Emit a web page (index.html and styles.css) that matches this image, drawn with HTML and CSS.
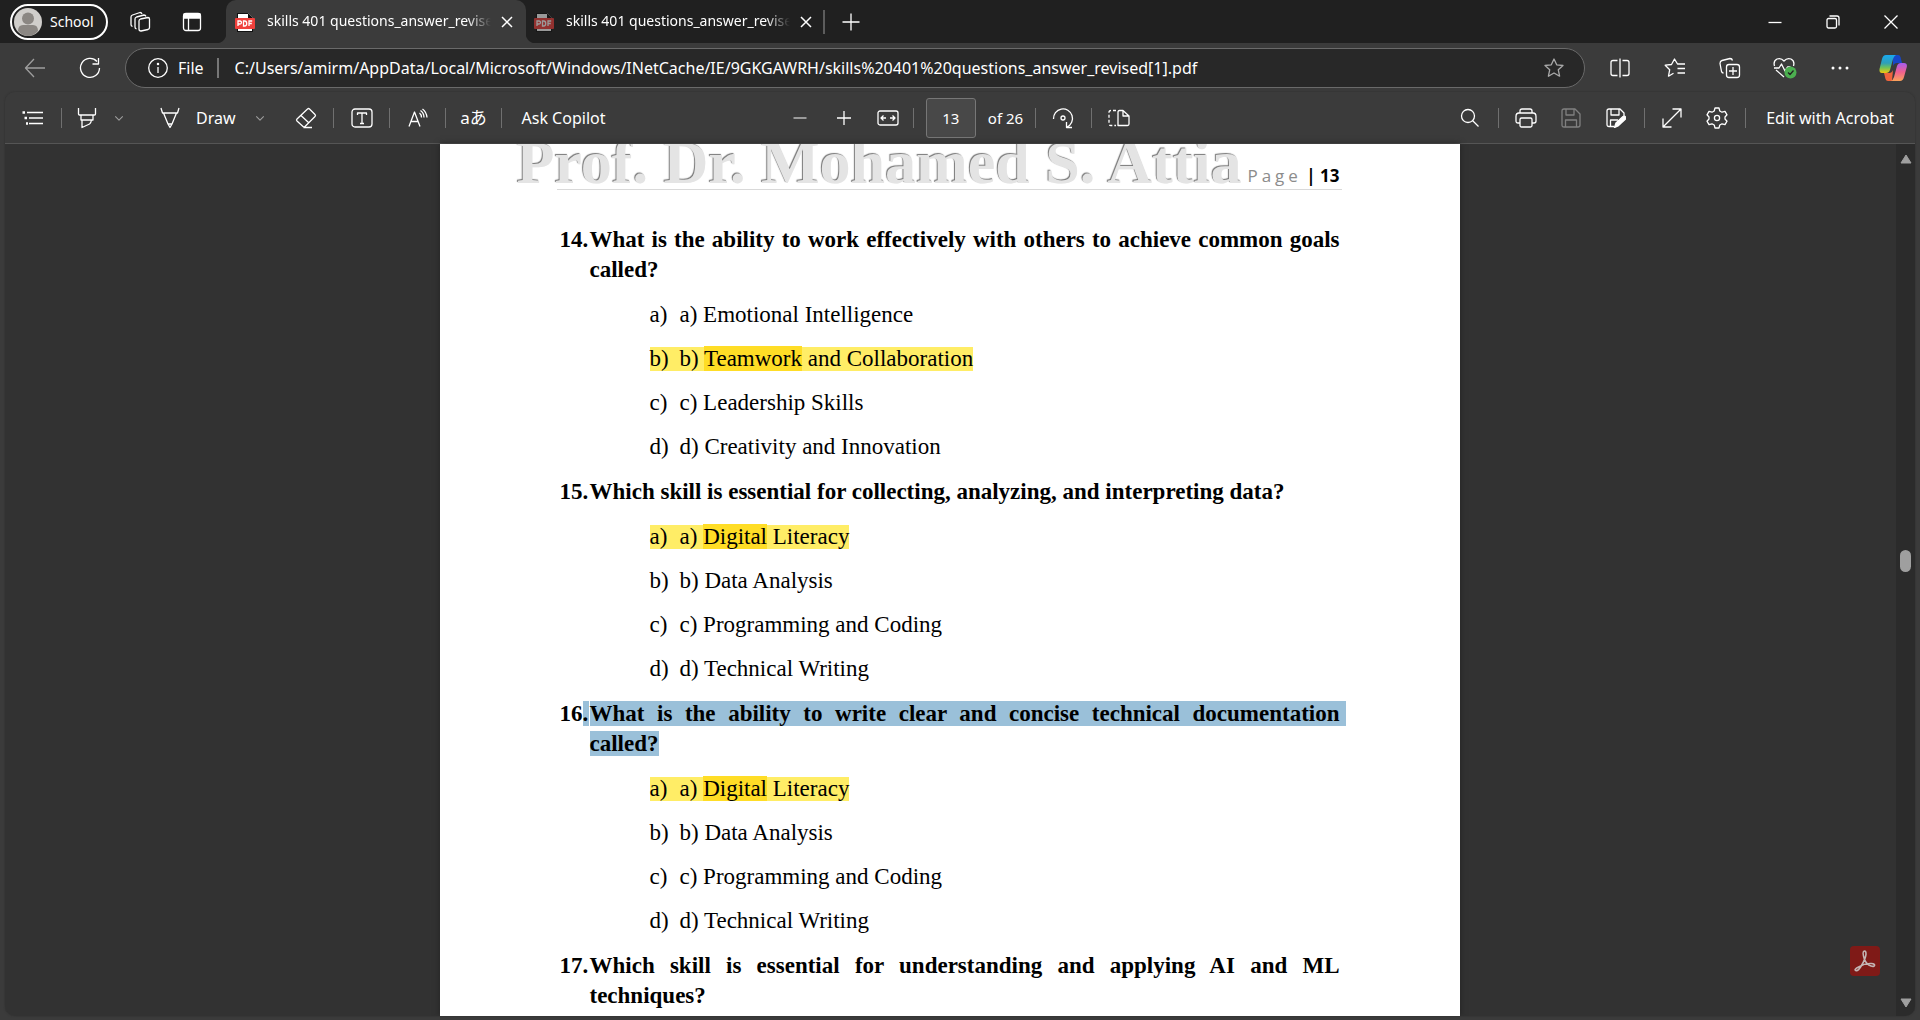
FILE: index.html
```html
<!DOCTYPE html>
<html lang="en">
<head>
<meta charset="utf-8">
<title>skills 401 questions_answer_revised[1].pdf</title>
<link rel="stylesheet" href="styles.css">
</head>
<body>
<svg class="defs" aria-hidden="true">
  <symbol id="pdf" viewBox="0 0 20 20">
    <path d="M2 1h11l5 5v13H2z" fill="#fff"/><path d="M2 1h11v1H3v4H2zM13 1l5 5h-5zM2 17h1v2h15v1H2zM17 6h1v13h-1z" fill="#111"/>
    <path d="M12 1l6 6h-1l-3-2-1-3z" fill="#111"/>
    <rect x="0" y="6" width="20" height="11" rx="1" fill="#f0403c"/>
    <path d="M3 14V9h2q1.500 0 1.500 1.500T5 12H3M8.500 9v5h1.200q2 0 2-2.500t-2-2.500zM14 14V9h3.200M14 11.500h2.800" fill="none" stroke="#fff" stroke-width="1.300"/>
  </symbol>
  <symbol id="x" viewBox="0 0 12 12"><path d="M1 1l10 10M11 1L1 11"/></symbol>
  <symbol id="chev" viewBox="0 0 12 12"><path d="M1.500 4L6 8.500 10.500 4"/></symbol>
</svg>

<header class="tabstrip">
  <button class="profile"><svg width="28" height="28" viewBox="0 0 28 28"><circle cx="14" cy="14" r="14" fill="#d0cecb"/><circle cx="14" cy="10.500" r="6" fill="#8b8783"/><path d="M4 23q0-6 5-6h10q5 0 5 6-4 5-10 5T4 23z" fill="#8b8783"/></svg>School</button>
  <button class="strip-btn" aria-label="Workspaces"><svg class="ic" width="22" height="22" viewBox="0 0 22 22"><path d="M11.500 8l7.500-1.500q1.500 0 1.500 1.500v8.500q0 1.500-1.500 2L12 20q-2 0-2-2v-8q0-1.500 1.500-2zM7.500 18Q6 17.500 6 16V8q0-1.500 1.500-2l7.500-2q1.500 0 2 1.500M3.500 15.500Q2 15 2 13.500V6q0-1.500 1.500-2L11 1.500q1.500 0 2 1.500"/></svg></button>
  <button class="strip-btn" aria-label="Tab actions"><svg class="ic" width="20" height="20" viewBox="0 0 20 20"><rect x="1.500" y="1.500" width="17" height="17" rx="2.500"/><path d="M2 2h16v4H2z" fill="#fff"/><path d="M6.500 6v12"/></svg></button>
  <nav class="tabs" aria-label="Tabs">
    <div class="tab active"><svg width="20" height="20"><use href="#pdf"/></svg><span class="tab-title">skills 401 questions_answer_revised</span><button class="close" aria-label="Close tab"><svg class="ic mid" width="12" height="12"><use href="#x"/></svg></button></div>
    <div class="tab"><svg class="dim" width="20" height="20"><use href="#pdf"/></svg><span class="tab-title">skills 401 questions_answer_revised</span><button class="close" aria-label="Close tab"><svg class="ic mid" width="12" height="12"><use href="#x"/></svg></button></div>
  </nav>
  <button class="strip-btn newtab" aria-label="New tab"><svg class="ic" width="20" height="20" viewBox="0 0 20 20"><path d="M10 1.500v17M1.500 10h17"/></svg></button>
  <div class="window">
    <button aria-label="Minimize"><svg class="ic" width="14" height="14" viewBox="0 0 14 14"><path d="M.5 7.500h13"/></svg></button>
    <button aria-label="Restore"><svg class="ic" width="14" height="14" viewBox="0 0 14 14"><rect x="1" y="3.500" width="9.500" height="9.500" rx="1.500"/><path d="M3.500 1H11q2 0 2 2v7.500"/></svg></button>
    <button aria-label="Close"><svg class="ic" width="14" height="14" viewBox="0 0 14 14"><path d="M.5.5l13 13M13.500.5l-13 13"/></svg></button>
  </div>
</header>

<div class="navbar">
  <button class="nav-btn faded" aria-label="Back"><svg class="ic" width="22" height="20" viewBox="0 0 22 20"><path d="M10 1L1.500 10l8.500 9M1.500 10H21"/></svg></button>
  <button class="nav-btn" aria-label="Refresh"><svg class="ic" width="22" height="22" viewBox="0 0 22 22"><path d="M18 4.500A9.500 9.500 0 1 0 20.500 11M19.500 1v6H13.500"/></svg></button>
  <div class="address">
    <button class="site"><svg class="ic" width="20" height="20" viewBox="0 0 20 20"><circle cx="10" cy="10" r="9.300"/><path d="M10 9v6"/><circle cx="10" cy="6" r=".6"/></svg>File</button>
    <input class="url" aria-label="Address" value="C:/Users/amirm/AppData/Local/Microsoft/Windows/INetCache/IE/9GKGAWRH/skills%20401%20questions_answer_revised[1].pdf">
    <button class="fav" aria-label="Add to favorites"><svg class="ic" width="20" height="20" viewBox="0 0 20 20"><path d="M10 1l2.700 5.800 6.300.7-4.700 4.300 1.300 6.400L10 15l-5.600 3.200 1.300-6.400L1 7.500l6.300-.7z"/></svg></button>
  </div>
  <button class="nav-btn" aria-label="Split screen"><svg class="ic" width="20" height="20" viewBox="0 0 20 20"><path d="M7.500 2.500H3q-2 0-2 2v11q0 2 2 2h4.500M12.500 2.500H17q2 0 2 2v11q0 2-2 2h-4.500M10 .5v19"/></svg></button>
  <button class="nav-btn" aria-label="Favorites"><svg class="ic" width="22" height="20" viewBox="0 0 22 20"><path d="M21 6h-7.500L10.500 1 7.500 6.500l-6.300.7 4.500 4.500-1.200 6.500 5-3M13.500 10.500H21M13.500 15H21"/></svg></button>
  <button class="nav-btn" aria-label="Collections"><svg class="ic" width="22" height="22" viewBox="0 0 22 22"><rect x="7.500" y="7.500" width="13" height="13" rx="2.500"/><path d="M14 10v8M10 14h8M4.500 16q-1.500 0-2-1.500l-1.500-8Q1 4 3 3.500l8-2q2 0 2.500 2"/></svg></button>
  <button class="nav-btn" aria-label="Browser essentials"><svg class="ic" width="24" height="22" viewBox="0 0 24 22"><path d="M1.500 9Q0 4 4 2q4-1.500 7 2 3-3.500 7-2 4 2 2.500 7M3 13l8 7M1 11h5l2.500-4 3.500 7 2.500-4h3"/><circle cx="17.500" cy="15.500" r="6" fill="#4caf50" stroke="none"/><path d="M15 15.500l2 2 3.500-4" stroke="#222"/></svg></button>
  <button class="nav-btn" aria-label="Settings and more"><svg width="18" height="4" viewBox="0 0 18 4" fill="#fff"><circle cx="2" cy="2" r="1.500"/><circle cx="9" cy="2" r="1.500"/><circle cx="16" cy="2" r="1.500"/></svg></button>
  <button class="nav-btn copilot" aria-label="Copilot"><svg width="28" height="28" viewBox="0 0 28 28">
    <defs>
      <linearGradient id="ga" x1="0" y1="0" x2="0" y2="1"><stop offset="0" stop-color="#19a9ef"/><stop offset=".45" stop-color="#2f9fb8"/><stop offset=".7" stop-color="#6fc25a"/><stop offset="1" stop-color="#f2c80f"/></linearGradient>
      <linearGradient id="gb" x1="0" y1="0" x2="0" y2="1"><stop offset="0" stop-color="#a55cf0"/><stop offset=".5" stop-color="#f0608f"/><stop offset="1" stop-color="#fba35a"/></linearGradient>
    </defs>
    <path d="M14 1h5q2 0 2.500 2l1.500 6h-5q-3 0-4 3z" fill="#1747c8"/>
    <path d="M13 27H9q-2 0-2.500-2L5 19h5q3 0 4-3z" fill="#f0643c"/>
    <path d="M7 1h10q-2 1-3 4l-3 11q-1 3-4 3H3q-3 0-2.500-4L3 5q1-4 4-4z" fill="url(#ga)"/>
    <path d="M21 27H12q2-1 3-4l3-11q1-3 4-3h3q3.500 0 2.800 4L25 23q-1 4-4 4z" fill="url(#gb)"/></svg></button>
</div>

<main class="viewer">
  <div class="toolbar" role="toolbar" aria-label="PDF tools">
    <div class="group left">
      <button class="tool" aria-label="Contents"><svg class="ic" width="22" height="16" viewBox="0 0 22 16"><path d="M5 2.500h16M7 8h14M7 13.500h14"/><path d="M.5 2.500H3M2.500 8H5M4 13.500h2" stroke-width="2.500"/></svg></button>
      <span class="sep"></span>
      <button class="tool pen" aria-label="Highlight"><svg class="ic" width="20" height="22" viewBox="0 0 20 22"><path d="M1.500 1v6q0 1 1 1h15q1 0 1-1V1M4 8v5h12V8M5 13v7.500l7.500-3.500q1.500-1 2-4"/></svg></button>
      <button class="more" aria-label="Highlight colors"><svg class="ic faded" width="10" height="10"><use href="#chev"/></svg></button>
      <button class="draw"><svg class="ic" width="20" height="22" viewBox="0 0 20 22"><path d="M1 1l1.500 5h15L19 1M3.500 6L8 17h4l4.500-11M8 17l2 3.500L12 17"/></svg>Draw</button>
      <button class="more" aria-label="Draw options"><svg class="ic faded" width="10" height="10"><use href="#chev"/></svg></button>
      <button class="tool eraser" aria-label="Erase"><svg class="ic" width="22" height="22" viewBox="0 0 22 22"><path d="M12.500 2q1-1 2 0l5.500 5.500q1 1 0 2L10 19.500q-1 1-2 0L2 14q-1-1 0-2zM6 8.500l8 7.500M8.500 20.500H17"/></svg></button>
      <span class="sep"></span>
      <button class="tool" aria-label="Add text"><svg class="ic" width="22" height="20" viewBox="0 0 22 20"><rect x="1" y="1" width="20" height="18" rx="3"/><path d="M6.500 7V5h9v2M11 5v10.500M9 15.500h4"/></svg></button>
      <span class="sep"></span>
      <button class="tool" aria-label="Read aloud"><svg class="ic" width="20" height="20" viewBox="0 0 20 20"><path d="M1 18.500L6.500 4 12 18.500M3 13.500h7M11.500 5q2 1.500 2 4.500M12.500 2.500q3.500 2.500 3.500 7M14.500 1q4 3 4.500 8.500"/></svg></button>
      <span class="sep"></span>
      <button class="tool translate" aria-label="Translate">aあ</button>
      <span class="sep"></span>
      <button class="ask">Ask Copilot</button>
    </div>
    <div class="group center">
      <button class="zoom soft" aria-label="Zoom out"><svg class="ic" width="14" height="14" viewBox="0 0 14 14"><path d="M.5 7h13"/></svg></button>
      <button class="zoom" aria-label="Zoom in"><svg class="ic" width="14" height="14" viewBox="0 0 14 14"><path d="M7 0v14M0 7h14"/></svg></button>
      <button class="zoom" aria-label="Fit to width"><svg class="ic" width="22" height="16" viewBox="0 0 22 16"><rect x="1" y="1" width="20" height="14" rx="2"/><path d="M9 8H4M6.500 5.500L4 8l2.500 2.500M13 8h5M15.500 5.500L18 8l-2.500 2.500"/></svg></button>
      <span class="sep slim"></span>
      <input class="page-no" aria-label="Page number" value="13"><span class="of">of 26</span>
      <span class="sep"></span>
      <button class="tool" aria-label="Rotate"><svg class="ic" width="22" height="22" viewBox="0 0 22 22"><path d="M1.500 12A9.500 9.500 0 1 1 15 20M14.500 15v5.500H20"/><circle cx="11" cy="11" r="2"/></svg></button>
      <span class="sep"></span>
      <button class="tool" aria-label="Page view"><svg class="ic" width="22" height="18" viewBox="0 0 22 18"><path d="M10 16.500V3q0-1.500 1.500-1.500H15l6 5.500v8q0 1.500-1.500 1.500zM15 1.500V7h6"/><path d="M8 1.500H3q-2 0-2 2v11q0 2 2 2h5" stroke-dasharray="3 2"/></svg></button>
    </div>
    <div class="group right">
      <button class="tool" aria-label="Find"><svg class="ic" width="20" height="20" viewBox="0 0 20 20"><circle cx="8" cy="8" r="6.500"/><path d="M12.500 12.500l6 6"/></svg></button>
      <span class="sep"></span>
      <button class="tool" aria-label="Print"><svg class="ic" width="22" height="20" viewBox="0 0 22 20"><path d="M5 5V3q0-2 2-2h8q2 0 2 2v2M5 15H3q-2 0-2-2V8.500Q1 5 4 5h14q3 0 3 3.500V13q0 2-2 2h-2"/><rect x="5" y="10" width="12" height="9" rx="1.500"/></svg></button>
      <button class="tool gap off" aria-label="Save"><svg class="ic" width="20" height="20" viewBox="0 0 20 20"><path d="M1 3q0-2 2-2h11l5 5v11q0 2-2 2H3q-2 0-2-2zM5 1v6h8V1M4.500 19v-7h11v7"/></svg></button>
      <button class="tool gap" aria-label="Save as"><svg class="ic" width="20" height="20" viewBox="0 0 20 20"><path d="M8 18.500H3q-2 0-2-2V3q0-2 2-2h11l4 4v3M5 1v6h8V1M4.500 18v-6H12"/><path d="M8.500 19.500l1.500-4.500 7-6.500q1.500-1 2.500.5t-.5 2.500l-7 6.500z" fill="#fff"/></svg></button>
      <span class="sep"></span>
      <button class="tool" aria-label="Full screen"><svg class="ic" width="20" height="20" viewBox="0 0 20 20"><path d="M1 19L19 1M10.500 1H19v8.500M1 10.500V19h8.500"/></svg></button>
      <button class="tool gap" aria-label="Settings"><svg class="ic" width="22" height="22" viewBox="0 0 22 22"><path d="M9 1h4l.8 3 2.200 1.200 3-.8 2 3.400L19 10v2l2 2.200-2 3.400-3-.8-2.200 1.200L13 21H9l-.8-3L6 16.800l-3 .8-2-3.400L3 12v-2L1 7.800l2-3.400 3 .8L8.200 4z"/><circle cx="11" cy="11" r="2.600"/></svg></button>
      <span class="sep"></span>
      <button class="acrobat">Edit with Acrobat</button>
    </div>
  </div>

  <div class="stage">
    <div class="pages">
      <article class="sheet">
        <div class="sheet-head"><span class="wordart">Prof. Dr. Mohamed S. Attia</span><span class="folio"><span class="word">Page</span> | 13</span></div>
        <section>
          <h2><span class="num">14.</span>What is the ability to work effectively with others to achieve common goals called?</h2>
          <ul>
            <li><span class="mk">a)</span>a) Emotional Intelligence</li>
            <li><mark><span class="mk">b)</span>b) <mark class="word-mark">Teamwork</mark> and Collaboration</mark></li>
            <li><span class="mk">c)</span>c) Leadership Skills</li>
            <li><span class="mk">d)</span>d) Creativity and Innovation</li>
          </ul>
        </section>
        <section>
          <h2><span class="num">15.</span>Which skill is essential for collecting, analyzing, and interpreting data?</h2>
          <ul>
            <li><mark><span class="mk">a)</span>a) <mark class="word-mark">Digital</mark> Literacy</mark></li>
            <li><span class="mk">b)</span>b) Data Analysis</li>
            <li><span class="mk">c)</span>c) Programming and Coding</li>
            <li><span class="mk">d)</span>d) Technical Writing</li>
          </ul>
        </section>
        <section>
          <h2><span class="num">16<span class="sel dot">.</span></span><span class="sel line">What is the ability to write clear and concise technical documentation</span> <span class="sel">called?</span></h2>
          <ul>
            <li><mark><span class="mk">a)</span>a) <mark class="word-mark">Digital</mark> Literacy</mark></li>
            <li><span class="mk">b)</span>b) Data Analysis</li>
            <li><span class="mk">c)</span>c) Programming and Coding</li>
            <li><span class="mk">d)</span>d) Technical Writing</li>
          </ul>
        </section>
        <section>
          <h2><span class="num">17.</span>Which skill is essential for understanding and applying AI and ML techniques?</h2>
        </section>
      </article>
      <button class="acro-badge" aria-label="Open in Acrobat"><svg width="22" height="22" viewBox="0 0 22 22" fill="none" stroke="#c4b5b4" stroke-width="1.600"><path d="M10.500 9.500Q8 2 10 1.200t2 3Q11.500 9 7.500 15.500 4 21.500 1.800 20.500T4.500 17Q11 13 17.500 13.500q3.500.5 3 2t-3.500.5Q12.500 14.500 10.500 9.500z"/></svg></button>
    </div>
    <div class="scrollbar" aria-hidden="true">
      <svg width="12" height="10" viewBox="0 0 12 10"><path d="M6 1l5 8H1z" fill="#9f9f9f" stroke="#9f9f9f" stroke-linejoin="round"/></svg>
      <span class="above"></span><span class="thumb"></span><span class="below"></span>
      <svg width="12" height="10" viewBox="0 0 12 10"><path d="M6 9l5-8H1z" fill="#9f9f9f" stroke="#9f9f9f" stroke-linejoin="round"/></svg>
    </div>
  </div>
</main>
</body>
</html>
```
FILE: styles.css
```css
* { box-sizing: border-box; }

body {
  margin: 0;
  height: 100vh;
  display: flex;
  flex-direction: column;
  overflow: hidden;
  background: #3b3b3b;
  color: #fff;
  font: 16px/20px "Noto Sans", "Open Sans", sans-serif;
}

button, input { font: inherit; color: inherit; }

button {
  flex: none;
  display: flex;
  align-items: center;
  justify-content: center;
  padding: 0;
  border: 0;
  background: none;
  white-space: nowrap;
}

svg { flex: none; display: block; }
.defs { position: absolute; width: 0; height: 0; }
.ic { fill: none; stroke: #fff; stroke-width: 1.3; stroke-linejoin: round; }
.mid { stroke-width: 1.5; }
.faded { opacity: .5; }
.soft { opacity: .75; }

/* Tab strip */
.tabstrip {
  flex: none;
  display: flex;
  align-items: center;
  height: 43px;
  padding-left: 10px;
  background: #202020;
  font-size: 14px;
}
.profile {
  width: 98px;
  height: 36px;
  justify-content: flex-start;
  gap: 8px;
  padding-left: 2px;
  border: 2px solid #fff;
  border-radius: 18px;
}
.strip-btn { width: 52px; height: 43px; margin-left: 6px; }
.strip-btn + .strip-btn { margin-left: 0; }
.tabs { display: flex; height: 43px; margin-left: 8px; }
.tab {
  position: relative;
  display: flex;
  align-items: center;
  width: 300px;
  padding: 0 7px 0 9px;
}
.tab + .tab { width: 299px; padding-left: 8px; }
.tab.active { background: #3b3b3b; border-radius: 10px 10px 0 0; }
.tab.active::before, .tab.active::after {
  content: "";
  position: absolute;
  bottom: 0;
  width: 10px;
  height: 10px;
}
.tab.active::before { right: 100%; background: radial-gradient(circle at 0 0, #202020 10px, #3b3b3b 11px); }
.tab.active::after { left: 100%; background: radial-gradient(circle at 100% 0, #202020 10px, #3b3b3b 11px); }
.tab:last-child::after {
  content: "";
  position: absolute;
  right: 0;
  width: 2px;
  height: 24px;
  background: #5c5c5c;
}
.tab-title {
  flex: 1;
  min-width: 0;
  margin: 0 4px 0 12px;
  padding-bottom: 2px;
  overflow: hidden;
  white-space: nowrap;
  mask-image: linear-gradient(to left, transparent, #000 24px);
}
.close { width: 24px; height: 24px; }
.dim { opacity: .55; }
.newtab { margin-left: 0; }
.window { display: flex; margin-left: auto; }
.window button { width: 58px; height: 43px; }

/* Navigation row */
.navbar {
  flex: none;
  display: flex;
  align-items: center;
  gap: 15px;
  height: 49px;
  padding: 1px 5px 0 15px;
}
.nav-btn { width: 40px; height: 40px; }
.copilot { justify-content: flex-start; padding-left: 4px; }
.address {
  flex: 1;
  min-width: 0;
  display: flex;
  align-items: center;
  height: 40px;
  padding: 0 20px 0 22px;
  border: 1px solid #6a6a6a;
  border-radius: 20px;
  background: #282828;
}
.site {
  gap: 10px;
  height: 20px;
  padding-right: 13px;
  border-right: 2px solid #777;
}
.url {
  flex: 1;
  min-width: 0;
  height: 24px;
  padding: 0 16px;
  border: 0;
  outline: 0;
  background: none;
}
.fav { opacity: .6; }

/* PDF viewer */
.viewer {
  flex: 1;
  min-height: 0;
  display: flex;
  flex-direction: column;
  margin: 0 5px 4px;
  overflow: hidden;
  border-radius: 10px;
  box-shadow: 0 0 2px #2c2c2c;
}
.toolbar {
  flex: none;
  display: flex;
  align-items: center;
  height: 52px;
  padding: 0 17px 0 9px;
  border-bottom: 1px solid #555;
  background: #3b3b3b;
}
.group { display: flex; align-items: center; height: 40px; }
.left, .right { flex: 1 0 0; }
.right { justify-content: flex-end; }
.tool { width: 38px; height: 38px; }
.gap { margin-left: 7px; }
.off { opacity: .35; }
.sep {
  flex: none;
  width: 18px;
  height: 20px;
  background: linear-gradient(#707070, #707070) center / 1px 100% no-repeat;
}
.slim { width: 8px; }
.pen { width: 33px; }
.more { width: 32px; height: 38px; }
.draw { gap: 16px; margin: 0 8px 0 25px; }
.eraser { margin-left: 11px; }
.translate { font: 17px/20px "Noto Sans", "Noto Sans CJK JP", sans-serif; }
.ask { padding-left: 11px; }
.center { padding-left: 4px; }
.zoom { width: 44px; height: 38px; }
.page-no {
  width: 50px;
  height: 40px;
  margin: 0 12px 0 8px;
  padding: 0;
  border: 1px solid #777;
  border-radius: 3px;
  background: #484848;
  text-align: center;
  font-size: 15px;
}
.of { margin-right: 3px; font-size: 15px; }
.acrobat { padding: 0 4px 0 12px; }

.stage { flex: 1; min-height: 0; display: flex; background: #323232; }
.pages { position: relative; flex: 1; min-width: 0; display: flex; justify-content: center; padding-right: 2px; }
.scrollbar {
  flex: none;
  display: flex;
  flex-direction: column;
  align-items: center;
  width: 19px;
  padding: 10px 0 8px;
  background: #2b2b2b;
}
.above { flex: 386; }
.below { flex: 427; }
.thumb { flex: none; width: 11px; height: 22px; border-radius: 6px; background: #9f9f9f; }
.acro-badge {
  position: absolute;
  right: 16px;
  bottom: 40px;
  width: 30px;
  height: 30px;
  border-radius: 4px;
  background: #7f1a17;
}

/* Document sheet */
.sheet {
  width: 100%;
  max-width: 1020px;
  padding: 0 120px;
  overflow: hidden;
  background: #fff;
  color: #000;
  box-shadow: 0 0 6px #222;
  font: 23px/30px "Liberation Serif", serif;
}
.sheet-head {
  display: flex;
  align-items: flex-end;
  justify-content: space-between;
  height: 46px;
  margin: 0 -2px 35px -3px;
  border-bottom: 1px solid #d9d9d9;
  white-space: nowrap;
}
.wordart {
  margin-left: -40px;
  color: #e4e4e4;
  font-size: 62px;
  line-height: 54px;
  font-weight: bold;
  text-shadow: -1px -1px 1px #777;
}
.folio { padding: 0 2px 2px 0; font: bold 17px/22px "Open Sans", sans-serif; }
.word { color: #8c8c8c; font-weight: normal; letter-spacing: 4px; }
h2 {
  margin: 0 0 15px;
  padding-left: 30px;
  font-size: 23px;
  line-height: 30px;
  text-align: justify;
}
.num { display: inline-block; width: 30px; margin-left: -30px; text-align: left; white-space: nowrap; }
.sel { background: #9ac0d9; }
.dot { padding-right: 1px; }
.line { margin-right: -6px; padding-right: 6px; }
ul {
  display: flex;
  flex-direction: column;
  gap: 14px;
  margin: 0 0 15px;
  padding: 0 0 0 90px;
  list-style: none;
}
.mk { display: inline-block; width: 30px; }
mark { display: inline-block; line-height: 24px; background: #ffed66; color: #000; }
.word-mark { display: inline; background: #ffdd26; }
```
